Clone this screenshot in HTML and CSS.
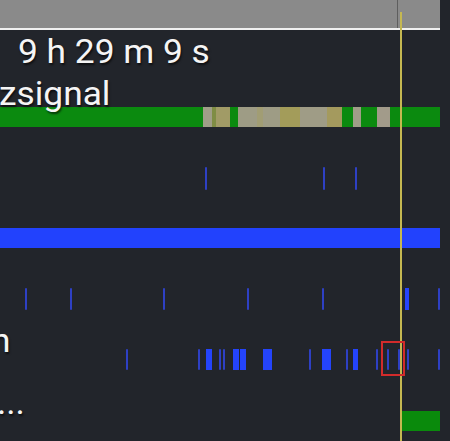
FILE: index.html
```html
<!DOCTYPE html>
<html lang="de">
<head>
  <meta charset="UTF-8">
  <meta name="viewport" content="width=device-width, initial-scale=1.0">
  <title>Akkuverlauf</title>
  <link rel="stylesheet" href="styles.css">
</head>
<body>
  <div class="chart">
    <div class="header"></div>
    <div class="label time">9 h 29 m 9 s</div>

    <div class="label signal-label">zsignal</div>
    <div class="track bar-track signal-track" id="signal"></div>

    <div class="track tick-track gps-track" id="gps"></div>

    <div class="track bar-track blue-track"></div>

    <div class="track tick-track wifi-track" id="wifi"></div>

    <div class="label screen-label">n</div>
    <div class="track tick-track wake-track" id="wake"></div>

    <div class="label more-label">...</div>
    <div class="track bar-track charge-track" id="charge"></div>

    <div class="cursor"></div>
    <div class="selection"></div>
  </div>
  <script>
    // Signal strength segments: [left, width, color]
    const signalSegments = [
      [203, 9, '#a09e88'],
      [212, 4, '#7f8d44'],
      [216, 14, '#a19b66'],
      [238, 19, '#9e9c85'],
      [257, 6, '#a19d74'],
      [263, 17, '#9e9c85'],
      [280, 20, '#a39c5a'],
      [300, 27, '#9f9c86'],
      [327, 15, '#a49a5e'],
      [353, 8, '#a09d88'],
      [377, 13, '#a29b8a']
    ];

    // Tick rows: [left, width]
    const gpsTicks = [[205, 2], [323, 2], [355, 2]];
    const wifiTicks = [[25, 2], [70, 2], [163, 2], [247, 2], [322, 2], [405, 4], [438, 2]];
    const wakeTicks = [
      [126, 2], [198, 2], [206, 6], [219, 2], [223, 2], [233, 6], [240, 6],
      [263, 9], [309, 2], [322, 9], [346, 2], [353, 5], [376, 2],
      [387, 2], [398, 2], [407, 2], [438, 2]
    ];
    const chargeBlocks = [[402, 38]];

    function fillTrack(id, items, cls) {
      const track = document.getElementById(id);
      items.forEach((item) => {
        const span = document.createElement('span');
        span.className = item[1] > 2 ? cls + ' wide' : cls;
        span.style.left = item[0] + 'px';
        span.style.width = item[1] + 'px';
        if (item[2]) span.style.background = item[2];
        track.appendChild(span);
      });
    }

    fillTrack('signal', signalSegments, 'segment');
    fillTrack('gps', gpsTicks, 'tick');
    fillTrack('wifi', wifiTicks, 'tick');
    fillTrack('wake', wakeTicks, 'tick');
    fillTrack('charge', chargeBlocks, 'block');
  </script>
</body>
</html>
```
FILE: styles.css
```css
body {
  margin: 0;
  background-color: #22252b;
}
.chart {
  position: relative;
  width: 450px;
  height: 441px;
  overflow: hidden;
  background-color: #22252b;
}
.header {
  width: 440px;
  height: 28px;
  background: linear-gradient(to right, #8a8a8a 397px, #5e5e5e 397px, #5e5e5e 398px, #8a8a8a 398px);
  border-bottom: 2px solid #f0f0f0;
}
.label {
  position: relative;
  z-index: 2;
  font-family: Roboto, "Liberation Sans", sans-serif;
  font-size: 33px;
  line-height: 33px;
  color: #f5f5f5;
  white-space: nowrap;
  transform: scaleX(1.07);
  transform-origin: 0 0;
  text-shadow: 1px 2px 2px rgba(0, 0, 0, 0.6);
}
.time { margin: 5px 0 0 18px; }
.signal-label { margin: 9px 0 0 -1px; }
.screen-label { margin: 14px 0 0 -9px; }
.more-label { margin: 16px 0 0 -3px; }

.track {
  position: relative;
  z-index: 1;
  width: 440px;
}
.bar-track { height: 20px; }
.signal-track {
  margin-top: -3px;
  background-color: #0b8a0f;
}
.gps-track { margin-top: 40px; height: 23px; }
.blue-track {
  margin-top: 38px;
  background-color: #2242fd;
}
.wifi-track { margin-top: 40px; height: 22px; }
.wake-track { margin-top: -8px; height: 21px; }
.charge-track { margin-top: -8px; }

.segment, .tick, .block {
  position: absolute;
  top: 0;
  bottom: 0;
}
.tick {
  background-color: #2e40c4;
  border-radius: 1px;
}
.tick.wide { background-color: #2444fb; border-radius: 0; }
.block { background-color: #0a8a0c; }

.cursor {
  position: absolute;
  z-index: 3;
  left: 400px;
  top: 12px;
  bottom: 0;
  width: 2px;
  background-color: #c5b851;
}
.selection {
  position: absolute;
  z-index: 4;
  left: 381px;
  top: 341px;
  width: 24px;
  height: 35px;
  box-sizing: border-box;
  border: 2px solid #d22b2b;
}
```
